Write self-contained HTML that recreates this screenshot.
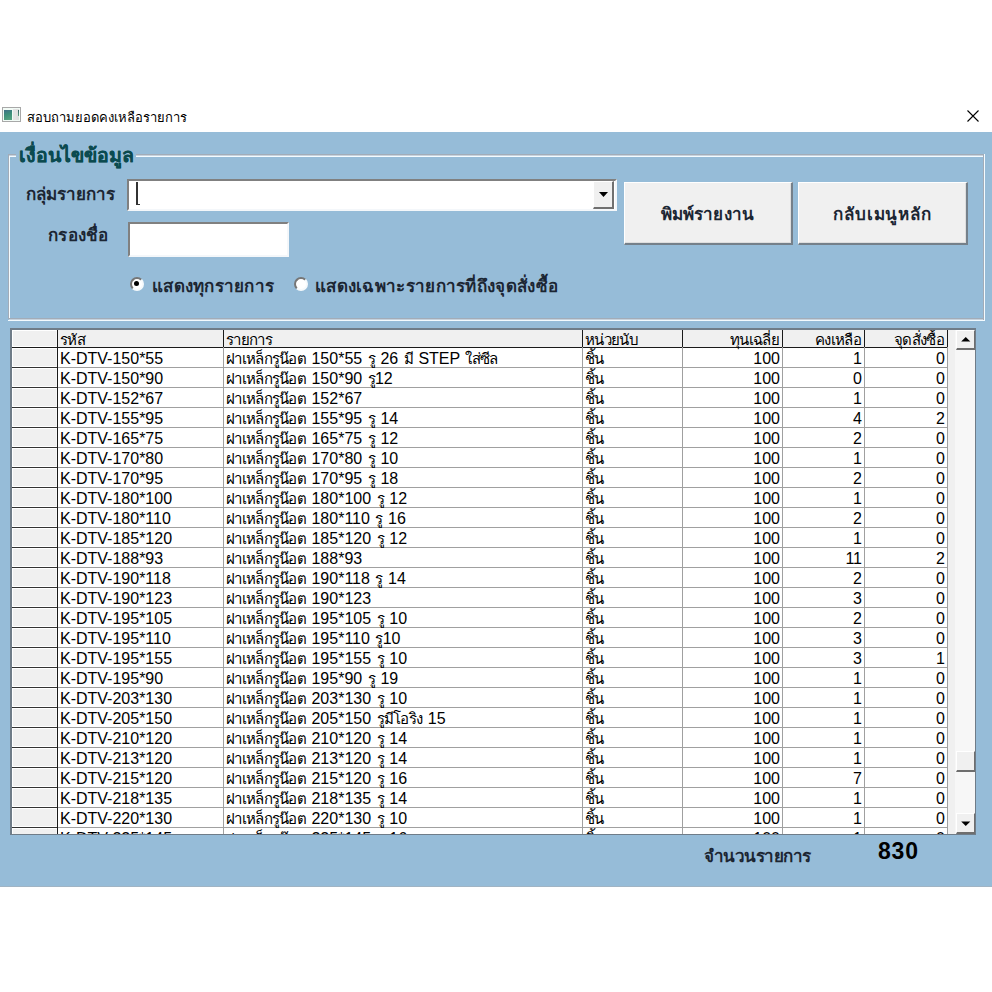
<!DOCTYPE html>
<html><head><meta charset="utf-8"><style>
*{margin:0;padding:0;box-sizing:border-box}
html,body{width:992px;height:992px;overflow:hidden;background:#fff;font-family:"Liberation Sans",sans-serif;}
.a{position:absolute}
.t{position:absolute;white-space:nowrap}
.g{position:absolute;white-space:nowrap;word-spacing:1px;font-size:16px;line-height:19px;color:#000}
.th{font-size:15px;letter-spacing:-0.7px}
.la{font-size:16px}
.lb{position:absolute;white-space:nowrap;font-size:17px;line-height:24px;font-weight:bold;color:#1c2633}
.btn{position:absolute;background:#f0f0f0;border-top:1px solid #fff;border-left:1px solid #fff;border-right:2px solid #75808a;border-bottom:2px solid #75808a;box-shadow:inset -1px -1px 0 #dedede}
.rs{position:absolute;background:#f0f0f0;border-top:1px solid #fff;border-left:1px solid #fff;border-bottom:1px solid #fff;border-right:1px solid #f7f7f7}
</style></head><body>
<div class="a" style="left:2px;top:107px;width:19px;height:15px;border:1px solid #a8a8a8;background:#f2fbf6"></div>
<div class="a" style="left:13px;top:109px;width:6px;height:11px;background:linear-gradient(90deg,#e6e6e6,#dedede)"></div>
<div class="a" style="left:4px;top:110px;width:8px;height:10px;background:linear-gradient(160deg,#3f6f88,#3d8f7a 45%,#5aa582)"></div>
<div class="a" style="left:18px;top:110px;width:1px;height:6px;background:linear-gradient(180deg,#3c5f66,#5c9f80)"></div>
<div class="t" style="left:27px;top:108.5px;font-size:13px;line-height:17px;color:#000">สอบถามยอดคงเหลือรายการ</div>
<svg class="a" style="left:967px;top:110px" width="12" height="12"><path d="M0.5 0.5L11.5 11.5M11.5 0.5L0.5 11.5" stroke="#000" stroke-width="1.1"/></svg>
<div class="a" style="left:0;top:132px;width:992px;height:755px;background:#96bcd8"></div>
<div class="a" style="left:0;top:886px;width:992px;height:1px;background:#a0b4c4"></div>
<div class="a" style="left:8px;top:154px;width:976px;height:1px;background:#a2acb8"></div>
<div class="a" style="left:9px;top:155px;width:974px;height:1px;background:#c6d2dd"></div>
<div class="a" style="left:8px;top:154px;width:1px;height:165px;background:#a2acb8"></div>
<div class="a" style="left:983px;top:154px;width:1px;height:166px;background:#a2acb8"></div>
<div class="a" style="left:8px;top:318px;width:975px;height:1px;background:#a2acb8"></div>
<div class="a" style="left:9px;top:319px;width:974px;height:1px;background:#c6d2dd"></div>
<div class="a" style="left:9px;top:156px;width:974px;height:1px;background:#f4fbff"></div>
<div class="a" style="left:9px;top:156px;width:1px;height:162px;background:#f4fbff"></div>
<div class="a" style="left:984px;top:154px;width:1px;height:167px;background:#f4fbff"></div>
<div class="a" style="left:8px;top:320px;width:977px;height:1px;background:#f4fbff"></div>
<div class="t" style="left:16px;top:142px;padding:0 2px 0 3px;background:#96bcd8;font-size:19.5px;line-height:26px;font-weight:bold;color:#0b4a4f;-webkit-text-stroke:0.15px #0b4a4f">เงื่อนไขข้อมูล</div>
<div class="lb" style="left:26px;top:183px;letter-spacing:0px">กลุ่มรายการ</div>
<div class="lb" style="left:48px;top:224px;letter-spacing:0.25px">กรองชื่อ</div>
<div class="a" style="left:127px;top:179px;width:490px;height:32px;background:#fff;border-top:2px solid #808080;border-left:2px solid #808080;border-right:2px solid #f4f7fa;border-bottom:2px solid #f4f7fa"></div>
<div class="a" style="left:136px;top:182px;width:1.5px;height:23px;background:#333"></div>
<div class="a" style="left:136px;top:203.5px;width:4px;height:1.5px;background:#333"></div>
<div class="a" style="left:593px;top:181px;width:21px;height:28px;background:#f0f0f0;border-right:2px solid #707070;border-bottom:2px solid #707070;border-top:1px solid #fff;border-left:1px solid #fff"></div>
<svg class="a" style="left:599px;top:192px" width="11" height="7"><path d="M0 0H9L4.5 5Z" fill="#000"/></svg>
<div class="a" style="left:128px;top:222px;width:161px;height:35px;background:#fff;border-top:2px solid #808080;border-left:2px solid #808080;border-right:2px solid #f4f7fa;border-bottom:2px solid #f4f7fa"></div>
<div class="btn" style="left:624px;top:182px;width:169px;height:63px"></div>
<div class="btn" style="left:798px;top:182px;width:170px;height:63px"></div>
<div class="lb" style="left:661px;top:202.5px;letter-spacing:0.1px">พิมพ์รายงาน</div>
<div class="lb" style="left:833px;top:202.5px;letter-spacing:0.9px">กลับเมนูหลัก</div>
<div class="a" style="left:130px;top:277px;width:14px;height:14px;border-radius:50%;background:#fff;border:2px solid;border-color:#767676 #f6fafc #f6fafc #767676"></div><div class="a" style="left:134px;top:281px;width:5px;height:5px;border-radius:50%;background:#000"></div>
<div class="a" style="left:294px;top:277px;width:14px;height:14px;border-radius:50%;background:#fff;border:2px solid;border-color:#767676 #f6fafc #f6fafc #767676"></div>
<div class="lb" style="left:152px;top:275px;letter-spacing:0.25px">แสดงทุกรายการ</div>
<div class="lb" style="left:315px;top:275px;letter-spacing:0.3px">แสดงเฉพาะรายการที่ถึงจุดสั่งซื้อ</div>
<div class="a" style="left:10px;top:328px;width:966px;height:507px;background:#fff;border-style:solid;border-width:2px 1px 1px 2px;border-color:#6f7c88"></div>
<div class="a" style="left:12px;top:330px;width:963px;height:504px;overflow:hidden">
<div class="a" style="left:0;top:0;width:935px;height:17px;background:#f0f0f0"></div>
<div class="rs" style="left:0;top:0px;width:45px;height:17px"></div>
<div class="rs" style="left:0;top:18px;width:45px;height:19px"></div>
<div class="rs" style="left:0;top:38px;width:45px;height:19px"></div>
<div class="rs" style="left:0;top:58px;width:45px;height:19px"></div>
<div class="rs" style="left:0;top:78px;width:45px;height:19px"></div>
<div class="rs" style="left:0;top:98px;width:45px;height:19px"></div>
<div class="rs" style="left:0;top:118px;width:45px;height:19px"></div>
<div class="rs" style="left:0;top:138px;width:45px;height:19px"></div>
<div class="rs" style="left:0;top:158px;width:45px;height:19px"></div>
<div class="rs" style="left:0;top:178px;width:45px;height:19px"></div>
<div class="rs" style="left:0;top:198px;width:45px;height:19px"></div>
<div class="rs" style="left:0;top:218px;width:45px;height:19px"></div>
<div class="rs" style="left:0;top:238px;width:45px;height:19px"></div>
<div class="rs" style="left:0;top:258px;width:45px;height:19px"></div>
<div class="rs" style="left:0;top:278px;width:45px;height:19px"></div>
<div class="rs" style="left:0;top:298px;width:45px;height:19px"></div>
<div class="rs" style="left:0;top:318px;width:45px;height:19px"></div>
<div class="rs" style="left:0;top:338px;width:45px;height:19px"></div>
<div class="rs" style="left:0;top:358px;width:45px;height:19px"></div>
<div class="rs" style="left:0;top:378px;width:45px;height:19px"></div>
<div class="rs" style="left:0;top:398px;width:45px;height:19px"></div>
<div class="rs" style="left:0;top:418px;width:45px;height:19px"></div>
<div class="rs" style="left:0;top:438px;width:45px;height:19px"></div>
<div class="rs" style="left:0;top:458px;width:45px;height:19px"></div>
<div class="rs" style="left:0;top:478px;width:45px;height:19px"></div>
<div class="rs" style="left:0;top:498px;width:45px;height:19px"></div>
<div class="a" style="left:0;top:17px;width:936px;height:1px;background:#1a1a1a"></div>
<div class="a" style="left:0;top:37px;width:45px;height:1px;background:#333"></div>
<div class="a" style="left:46px;top:37px;width:889px;height:1px;background:#a0a0a0"></div>
<div class="a" style="left:0;top:57px;width:45px;height:1px;background:#333"></div>
<div class="a" style="left:46px;top:57px;width:889px;height:1px;background:#a0a0a0"></div>
<div class="a" style="left:0;top:77px;width:45px;height:1px;background:#333"></div>
<div class="a" style="left:46px;top:77px;width:889px;height:1px;background:#a0a0a0"></div>
<div class="a" style="left:0;top:97px;width:45px;height:1px;background:#333"></div>
<div class="a" style="left:46px;top:97px;width:889px;height:1px;background:#a0a0a0"></div>
<div class="a" style="left:0;top:117px;width:45px;height:1px;background:#333"></div>
<div class="a" style="left:46px;top:117px;width:889px;height:1px;background:#a0a0a0"></div>
<div class="a" style="left:0;top:137px;width:45px;height:1px;background:#333"></div>
<div class="a" style="left:46px;top:137px;width:889px;height:1px;background:#a0a0a0"></div>
<div class="a" style="left:0;top:157px;width:45px;height:1px;background:#333"></div>
<div class="a" style="left:46px;top:157px;width:889px;height:1px;background:#a0a0a0"></div>
<div class="a" style="left:0;top:177px;width:45px;height:1px;background:#333"></div>
<div class="a" style="left:46px;top:177px;width:889px;height:1px;background:#a0a0a0"></div>
<div class="a" style="left:0;top:197px;width:45px;height:1px;background:#333"></div>
<div class="a" style="left:46px;top:197px;width:889px;height:1px;background:#a0a0a0"></div>
<div class="a" style="left:0;top:217px;width:45px;height:1px;background:#333"></div>
<div class="a" style="left:46px;top:217px;width:889px;height:1px;background:#a0a0a0"></div>
<div class="a" style="left:0;top:237px;width:45px;height:1px;background:#333"></div>
<div class="a" style="left:46px;top:237px;width:889px;height:1px;background:#a0a0a0"></div>
<div class="a" style="left:0;top:257px;width:45px;height:1px;background:#333"></div>
<div class="a" style="left:46px;top:257px;width:889px;height:1px;background:#a0a0a0"></div>
<div class="a" style="left:0;top:277px;width:45px;height:1px;background:#333"></div>
<div class="a" style="left:46px;top:277px;width:889px;height:1px;background:#a0a0a0"></div>
<div class="a" style="left:0;top:297px;width:45px;height:1px;background:#333"></div>
<div class="a" style="left:46px;top:297px;width:889px;height:1px;background:#a0a0a0"></div>
<div class="a" style="left:0;top:317px;width:45px;height:1px;background:#333"></div>
<div class="a" style="left:46px;top:317px;width:889px;height:1px;background:#a0a0a0"></div>
<div class="a" style="left:0;top:337px;width:45px;height:1px;background:#333"></div>
<div class="a" style="left:46px;top:337px;width:889px;height:1px;background:#a0a0a0"></div>
<div class="a" style="left:0;top:357px;width:45px;height:1px;background:#333"></div>
<div class="a" style="left:46px;top:357px;width:889px;height:1px;background:#a0a0a0"></div>
<div class="a" style="left:0;top:377px;width:45px;height:1px;background:#333"></div>
<div class="a" style="left:46px;top:377px;width:889px;height:1px;background:#a0a0a0"></div>
<div class="a" style="left:0;top:397px;width:45px;height:1px;background:#333"></div>
<div class="a" style="left:46px;top:397px;width:889px;height:1px;background:#a0a0a0"></div>
<div class="a" style="left:0;top:417px;width:45px;height:1px;background:#333"></div>
<div class="a" style="left:46px;top:417px;width:889px;height:1px;background:#a0a0a0"></div>
<div class="a" style="left:0;top:437px;width:45px;height:1px;background:#333"></div>
<div class="a" style="left:46px;top:437px;width:889px;height:1px;background:#a0a0a0"></div>
<div class="a" style="left:0;top:457px;width:45px;height:1px;background:#333"></div>
<div class="a" style="left:46px;top:457px;width:889px;height:1px;background:#a0a0a0"></div>
<div class="a" style="left:0;top:477px;width:45px;height:1px;background:#333"></div>
<div class="a" style="left:46px;top:477px;width:889px;height:1px;background:#a0a0a0"></div>
<div class="a" style="left:0;top:497px;width:45px;height:1px;background:#333"></div>
<div class="a" style="left:46px;top:497px;width:889px;height:1px;background:#a0a0a0"></div>
<div class="a" style="left:45px;top:0;width:1px;height:17px;background:#1a1a1a"></div>
<div class="a" style="left:45px;top:17px;width:1px;height:487px;background:#1a1a1a"></div>
<div class="a" style="left:211px;top:0;width:1px;height:17px;background:#1a1a1a"></div>
<div class="a" style="left:211px;top:17px;width:1px;height:487px;background:#a0a0a0"></div>
<div class="a" style="left:570px;top:0;width:1px;height:17px;background:#1a1a1a"></div>
<div class="a" style="left:570px;top:17px;width:1px;height:487px;background:#a0a0a0"></div>
<div class="a" style="left:670px;top:0;width:1px;height:17px;background:#1a1a1a"></div>
<div class="a" style="left:670px;top:17px;width:1px;height:487px;background:#a0a0a0"></div>
<div class="a" style="left:770px;top:0;width:1px;height:17px;background:#1a1a1a"></div>
<div class="a" style="left:770px;top:17px;width:1px;height:487px;background:#a0a0a0"></div>
<div class="a" style="left:852px;top:0;width:1px;height:17px;background:#1a1a1a"></div>
<div class="a" style="left:852px;top:17px;width:1px;height:487px;background:#a0a0a0"></div>
<div class="a" style="left:935px;top:0;width:1px;height:17px;background:#1a1a1a"></div>
<div class="a" style="left:935px;top:17px;width:1px;height:487px;background:#a0a0a0"></div>
<div class="g" style="left:48px;top:0px"><span class="th">รหัส</span></div>
<div class="g" style="left:214px;top:0px"><span class="th">รายการ</span></div>
<div class="g" style="left:573px;top:0px"><span class="th">หน่วยนับ</span></div>
<div class="g" style="left:671px;width:96px;text-align:right;top:0px"><span class="th">ทุนเฉลี่ย</span></div>
<div class="g" style="left:771px;width:78px;text-align:right;top:0px"><span class="th">คงเหลือ</span></div>
<div class="g" style="left:853px;width:79px;text-align:right;top:0px"><span class="th">จุดสั่งซื้อ</span></div>
<div class="g" style="left:48px;top:19px"><span class="la">K-DTV-150*55</span></div>
<div class="g" style="left:214px;top:19px"><span class="th">ฝาเหล็กรูน๊อต</span><span class="la"> 150*55 </span><span class="th">รู</span><span class="la"> 26 </span><span class="th">มี</span><span class="la"> STEP </span><span class="th">ใส่ซีล</span></div>
<div class="g" style="left:573px;top:19px"><span class="th">ชิ้น</span></div>
<div class="g" style="left:671px;width:97px;text-align:right;top:19px"><span class="la">100</span></div>
<div class="g" style="left:771px;width:79px;text-align:right;top:19px"><span class="la">1</span></div>
<div class="g" style="left:853px;width:80px;text-align:right;top:19px"><span class="la">0</span></div>
<div class="g" style="left:48px;top:39px"><span class="la">K-DTV-150*90</span></div>
<div class="g" style="left:214px;top:39px"><span class="th">ฝาเหล็กรูน๊อต</span><span class="la"> 150*90 </span><span class="th">รู</span><span class="la">12</span></div>
<div class="g" style="left:573px;top:39px"><span class="th">ชิ้น</span></div>
<div class="g" style="left:671px;width:97px;text-align:right;top:39px"><span class="la">100</span></div>
<div class="g" style="left:771px;width:79px;text-align:right;top:39px"><span class="la">0</span></div>
<div class="g" style="left:853px;width:80px;text-align:right;top:39px"><span class="la">0</span></div>
<div class="g" style="left:48px;top:59px"><span class="la">K-DTV-152*67</span></div>
<div class="g" style="left:214px;top:59px"><span class="th">ฝาเหล็กรูน๊อต</span><span class="la"> 152*67</span></div>
<div class="g" style="left:573px;top:59px"><span class="th">ชิ้น</span></div>
<div class="g" style="left:671px;width:97px;text-align:right;top:59px"><span class="la">100</span></div>
<div class="g" style="left:771px;width:79px;text-align:right;top:59px"><span class="la">1</span></div>
<div class="g" style="left:853px;width:80px;text-align:right;top:59px"><span class="la">0</span></div>
<div class="g" style="left:48px;top:79px"><span class="la">K-DTV-155*95</span></div>
<div class="g" style="left:214px;top:79px"><span class="th">ฝาเหล็กรูน๊อต</span><span class="la"> 155*95 </span><span class="th">รู</span><span class="la"> 14</span></div>
<div class="g" style="left:573px;top:79px"><span class="th">ชิ้น</span></div>
<div class="g" style="left:671px;width:97px;text-align:right;top:79px"><span class="la">100</span></div>
<div class="g" style="left:771px;width:79px;text-align:right;top:79px"><span class="la">4</span></div>
<div class="g" style="left:853px;width:80px;text-align:right;top:79px"><span class="la">2</span></div>
<div class="g" style="left:48px;top:99px"><span class="la">K-DTV-165*75</span></div>
<div class="g" style="left:214px;top:99px"><span class="th">ฝาเหล็กรูน๊อต</span><span class="la"> 165*75 </span><span class="th">รู</span><span class="la"> 12</span></div>
<div class="g" style="left:573px;top:99px"><span class="th">ชิ้น</span></div>
<div class="g" style="left:671px;width:97px;text-align:right;top:99px"><span class="la">100</span></div>
<div class="g" style="left:771px;width:79px;text-align:right;top:99px"><span class="la">2</span></div>
<div class="g" style="left:853px;width:80px;text-align:right;top:99px"><span class="la">0</span></div>
<div class="g" style="left:48px;top:119px"><span class="la">K-DTV-170*80</span></div>
<div class="g" style="left:214px;top:119px"><span class="th">ฝาเหล็กรูน๊อต</span><span class="la"> 170*80 </span><span class="th">รู</span><span class="la"> 10</span></div>
<div class="g" style="left:573px;top:119px"><span class="th">ชิ้น</span></div>
<div class="g" style="left:671px;width:97px;text-align:right;top:119px"><span class="la">100</span></div>
<div class="g" style="left:771px;width:79px;text-align:right;top:119px"><span class="la">1</span></div>
<div class="g" style="left:853px;width:80px;text-align:right;top:119px"><span class="la">0</span></div>
<div class="g" style="left:48px;top:139px"><span class="la">K-DTV-170*95</span></div>
<div class="g" style="left:214px;top:139px"><span class="th">ฝาเหล็กรูน๊อต</span><span class="la"> 170*95 </span><span class="th">รู</span><span class="la"> 18</span></div>
<div class="g" style="left:573px;top:139px"><span class="th">ชิ้น</span></div>
<div class="g" style="left:671px;width:97px;text-align:right;top:139px"><span class="la">100</span></div>
<div class="g" style="left:771px;width:79px;text-align:right;top:139px"><span class="la">2</span></div>
<div class="g" style="left:853px;width:80px;text-align:right;top:139px"><span class="la">0</span></div>
<div class="g" style="left:48px;top:159px"><span class="la">K-DTV-180*100</span></div>
<div class="g" style="left:214px;top:159px"><span class="th">ฝาเหล็กรูน๊อต</span><span class="la"> 180*100 </span><span class="th">รู</span><span class="la"> 12</span></div>
<div class="g" style="left:573px;top:159px"><span class="th">ชิ้น</span></div>
<div class="g" style="left:671px;width:97px;text-align:right;top:159px"><span class="la">100</span></div>
<div class="g" style="left:771px;width:79px;text-align:right;top:159px"><span class="la">1</span></div>
<div class="g" style="left:853px;width:80px;text-align:right;top:159px"><span class="la">0</span></div>
<div class="g" style="left:48px;top:179px"><span class="la">K-DTV-180*110</span></div>
<div class="g" style="left:214px;top:179px"><span class="th">ฝาเหล็กรูน๊อต</span><span class="la"> 180*110 </span><span class="th">รู</span><span class="la"> 16</span></div>
<div class="g" style="left:573px;top:179px"><span class="th">ชิ้น</span></div>
<div class="g" style="left:671px;width:97px;text-align:right;top:179px"><span class="la">100</span></div>
<div class="g" style="left:771px;width:79px;text-align:right;top:179px"><span class="la">2</span></div>
<div class="g" style="left:853px;width:80px;text-align:right;top:179px"><span class="la">0</span></div>
<div class="g" style="left:48px;top:199px"><span class="la">K-DTV-185*120</span></div>
<div class="g" style="left:214px;top:199px"><span class="th">ฝาเหล็กรูน๊อต</span><span class="la"> 185*120 </span><span class="th">รู</span><span class="la"> 12</span></div>
<div class="g" style="left:573px;top:199px"><span class="th">ชิ้น</span></div>
<div class="g" style="left:671px;width:97px;text-align:right;top:199px"><span class="la">100</span></div>
<div class="g" style="left:771px;width:79px;text-align:right;top:199px"><span class="la">1</span></div>
<div class="g" style="left:853px;width:80px;text-align:right;top:199px"><span class="la">0</span></div>
<div class="g" style="left:48px;top:219px"><span class="la">K-DTV-188*93</span></div>
<div class="g" style="left:214px;top:219px"><span class="th">ฝาเหล็กรูน๊อต</span><span class="la"> 188*93</span></div>
<div class="g" style="left:573px;top:219px"><span class="th">ชิ้น</span></div>
<div class="g" style="left:671px;width:97px;text-align:right;top:219px"><span class="la">100</span></div>
<div class="g" style="left:771px;width:79px;text-align:right;top:219px"><span class="la">11</span></div>
<div class="g" style="left:853px;width:80px;text-align:right;top:219px"><span class="la">2</span></div>
<div class="g" style="left:48px;top:239px"><span class="la">K-DTV-190*118</span></div>
<div class="g" style="left:214px;top:239px"><span class="th">ฝาเหล็กรูน๊อต</span><span class="la"> 190*118 </span><span class="th">รู</span><span class="la"> 14</span></div>
<div class="g" style="left:573px;top:239px"><span class="th">ชิ้น</span></div>
<div class="g" style="left:671px;width:97px;text-align:right;top:239px"><span class="la">100</span></div>
<div class="g" style="left:771px;width:79px;text-align:right;top:239px"><span class="la">2</span></div>
<div class="g" style="left:853px;width:80px;text-align:right;top:239px"><span class="la">0</span></div>
<div class="g" style="left:48px;top:259px"><span class="la">K-DTV-190*123</span></div>
<div class="g" style="left:214px;top:259px"><span class="th">ฝาเหล็กรูน๊อต</span><span class="la"> 190*123</span></div>
<div class="g" style="left:573px;top:259px"><span class="th">ชิ้น</span></div>
<div class="g" style="left:671px;width:97px;text-align:right;top:259px"><span class="la">100</span></div>
<div class="g" style="left:771px;width:79px;text-align:right;top:259px"><span class="la">3</span></div>
<div class="g" style="left:853px;width:80px;text-align:right;top:259px"><span class="la">0</span></div>
<div class="g" style="left:48px;top:279px"><span class="la">K-DTV-195*105</span></div>
<div class="g" style="left:214px;top:279px"><span class="th">ฝาเหล็กรูน๊อต</span><span class="la"> 195*105 </span><span class="th">รู</span><span class="la"> 10</span></div>
<div class="g" style="left:573px;top:279px"><span class="th">ชิ้น</span></div>
<div class="g" style="left:671px;width:97px;text-align:right;top:279px"><span class="la">100</span></div>
<div class="g" style="left:771px;width:79px;text-align:right;top:279px"><span class="la">2</span></div>
<div class="g" style="left:853px;width:80px;text-align:right;top:279px"><span class="la">0</span></div>
<div class="g" style="left:48px;top:299px"><span class="la">K-DTV-195*110</span></div>
<div class="g" style="left:214px;top:299px"><span class="th">ฝาเหล็กรูน๊อต</span><span class="la"> 195*110 </span><span class="th">รู</span><span class="la">10</span></div>
<div class="g" style="left:573px;top:299px"><span class="th">ชิ้น</span></div>
<div class="g" style="left:671px;width:97px;text-align:right;top:299px"><span class="la">100</span></div>
<div class="g" style="left:771px;width:79px;text-align:right;top:299px"><span class="la">3</span></div>
<div class="g" style="left:853px;width:80px;text-align:right;top:299px"><span class="la">0</span></div>
<div class="g" style="left:48px;top:319px"><span class="la">K-DTV-195*155</span></div>
<div class="g" style="left:214px;top:319px"><span class="th">ฝาเหล็กรูน๊อต</span><span class="la"> 195*155 </span><span class="th">รู</span><span class="la"> 10</span></div>
<div class="g" style="left:573px;top:319px"><span class="th">ชิ้น</span></div>
<div class="g" style="left:671px;width:97px;text-align:right;top:319px"><span class="la">100</span></div>
<div class="g" style="left:771px;width:79px;text-align:right;top:319px"><span class="la">3</span></div>
<div class="g" style="left:853px;width:80px;text-align:right;top:319px"><span class="la">1</span></div>
<div class="g" style="left:48px;top:339px"><span class="la">K-DTV-195*90</span></div>
<div class="g" style="left:214px;top:339px"><span class="th">ฝาเหล็กรูน๊อต</span><span class="la"> 195*90 </span><span class="th">รู</span><span class="la"> 19</span></div>
<div class="g" style="left:573px;top:339px"><span class="th">ชิ้น</span></div>
<div class="g" style="left:671px;width:97px;text-align:right;top:339px"><span class="la">100</span></div>
<div class="g" style="left:771px;width:79px;text-align:right;top:339px"><span class="la">1</span></div>
<div class="g" style="left:853px;width:80px;text-align:right;top:339px"><span class="la">0</span></div>
<div class="g" style="left:48px;top:359px"><span class="la">K-DTV-203*130</span></div>
<div class="g" style="left:214px;top:359px"><span class="th">ฝาเหล็กรูน๊อต</span><span class="la"> 203*130 </span><span class="th">รู</span><span class="la"> 10</span></div>
<div class="g" style="left:573px;top:359px"><span class="th">ชิ้น</span></div>
<div class="g" style="left:671px;width:97px;text-align:right;top:359px"><span class="la">100</span></div>
<div class="g" style="left:771px;width:79px;text-align:right;top:359px"><span class="la">1</span></div>
<div class="g" style="left:853px;width:80px;text-align:right;top:359px"><span class="la">0</span></div>
<div class="g" style="left:48px;top:379px"><span class="la">K-DTV-205*150</span></div>
<div class="g" style="left:214px;top:379px"><span class="th">ฝาเหล็กรูน๊อต</span><span class="la"> 205*150 </span><span class="th">รูมีโอริง</span><span class="la"> 15</span></div>
<div class="g" style="left:573px;top:379px"><span class="th">ชิ้น</span></div>
<div class="g" style="left:671px;width:97px;text-align:right;top:379px"><span class="la">100</span></div>
<div class="g" style="left:771px;width:79px;text-align:right;top:379px"><span class="la">1</span></div>
<div class="g" style="left:853px;width:80px;text-align:right;top:379px"><span class="la">0</span></div>
<div class="g" style="left:48px;top:399px"><span class="la">K-DTV-210*120</span></div>
<div class="g" style="left:214px;top:399px"><span class="th">ฝาเหล็กรูน๊อต</span><span class="la"> 210*120 </span><span class="th">รู</span><span class="la"> 14</span></div>
<div class="g" style="left:573px;top:399px"><span class="th">ชิ้น</span></div>
<div class="g" style="left:671px;width:97px;text-align:right;top:399px"><span class="la">100</span></div>
<div class="g" style="left:771px;width:79px;text-align:right;top:399px"><span class="la">1</span></div>
<div class="g" style="left:853px;width:80px;text-align:right;top:399px"><span class="la">0</span></div>
<div class="g" style="left:48px;top:419px"><span class="la">K-DTV-213*120</span></div>
<div class="g" style="left:214px;top:419px"><span class="th">ฝาเหล็กรูน๊อต</span><span class="la"> 213*120 </span><span class="th">รู</span><span class="la"> 14</span></div>
<div class="g" style="left:573px;top:419px"><span class="th">ชิ้น</span></div>
<div class="g" style="left:671px;width:97px;text-align:right;top:419px"><span class="la">100</span></div>
<div class="g" style="left:771px;width:79px;text-align:right;top:419px"><span class="la">1</span></div>
<div class="g" style="left:853px;width:80px;text-align:right;top:419px"><span class="la">0</span></div>
<div class="g" style="left:48px;top:439px"><span class="la">K-DTV-215*120</span></div>
<div class="g" style="left:214px;top:439px"><span class="th">ฝาเหล็กรูน๊อต</span><span class="la"> 215*120 </span><span class="th">รู</span><span class="la"> 16</span></div>
<div class="g" style="left:573px;top:439px"><span class="th">ชิ้น</span></div>
<div class="g" style="left:671px;width:97px;text-align:right;top:439px"><span class="la">100</span></div>
<div class="g" style="left:771px;width:79px;text-align:right;top:439px"><span class="la">7</span></div>
<div class="g" style="left:853px;width:80px;text-align:right;top:439px"><span class="la">0</span></div>
<div class="g" style="left:48px;top:459px"><span class="la">K-DTV-218*135</span></div>
<div class="g" style="left:214px;top:459px"><span class="th">ฝาเหล็กรูน๊อต</span><span class="la"> 218*135 </span><span class="th">รู</span><span class="la"> 14</span></div>
<div class="g" style="left:573px;top:459px"><span class="th">ชิ้น</span></div>
<div class="g" style="left:671px;width:97px;text-align:right;top:459px"><span class="la">100</span></div>
<div class="g" style="left:771px;width:79px;text-align:right;top:459px"><span class="la">1</span></div>
<div class="g" style="left:853px;width:80px;text-align:right;top:459px"><span class="la">0</span></div>
<div class="g" style="left:48px;top:479px"><span class="la">K-DTV-220*130</span></div>
<div class="g" style="left:214px;top:479px"><span class="th">ฝาเหล็กรูน๊อต</span><span class="la"> 220*130 </span><span class="th">รู</span><span class="la"> 10</span></div>
<div class="g" style="left:573px;top:479px"><span class="th">ชิ้น</span></div>
<div class="g" style="left:671px;width:97px;text-align:right;top:479px"><span class="la">100</span></div>
<div class="g" style="left:771px;width:79px;text-align:right;top:479px"><span class="la">1</span></div>
<div class="g" style="left:853px;width:80px;text-align:right;top:479px"><span class="la">0</span></div>
<div class="g" style="left:48px;top:499px"><span class="la">K-DTV-225*145</span></div>
<div class="g" style="left:214px;top:499px"><span class="th">ฝาเหล็กรูน๊อต</span><span class="la"> 225*145 </span><span class="th">รู</span><span class="la"> 16</span></div>
<div class="g" style="left:573px;top:499px"><span class="th">ชิ้น</span></div>
<div class="g" style="left:671px;width:97px;text-align:right;top:499px"><span class="la">100</span></div>
<div class="g" style="left:771px;width:79px;text-align:right;top:499px"><span class="la">1</span></div>
<div class="g" style="left:853px;width:80px;text-align:right;top:499px"><span class="la">0</span></div>
<div class="a" style="left:936px;top:0;width:27px;height:504px;background:linear-gradient(90deg,#f0f0f0 0,#f0f0f0 7px,#f7f7f7 7px)"></div>
<div class="a" style="left:944px;top:0px;width:19px;height:20px;background:#f0f0f0;border-top:1px solid #fff;border-left:1px solid #fff;border-right:1px solid #6e6e6e;border-bottom:2px solid #6e6e6e"></div>
<svg class="a" style="left:949px;top:6px" width="10" height="6"><path d="M0.2 5.5H9.3L4.75 1Z" fill="#000"/></svg>
<div class="a" style="left:944px;top:421px;width:19px;height:21px;background:#f0f0f0;border-top:1px solid #fff;border-left:1px solid #fff;border-right:1px solid #6e6e6e;border-bottom:2px solid #6e6e6e"></div>
<div class="a" style="left:944px;top:483px;width:19px;height:21px;background:#f0f0f0;border-top:1px solid #fff;border-left:1px solid #fff;border-right:1px solid #6e6e6e;border-bottom:2px solid #6e6e6e"></div>
<svg class="a" style="left:949px;top:491px" width="10" height="6"><path d="M0.2 0.5H9.3L4.75 5Z" fill="#000"/></svg>
</div>
<div class="lb" style="left:704px;top:844.5px;letter-spacing:-0.55px">จำนวนรายการ</div>
<div class="t" style="left:878px;top:838px;font-size:23px;line-height:26px;font-weight:bold;color:#000;letter-spacing:0.8px">830</div>
</body></html>
